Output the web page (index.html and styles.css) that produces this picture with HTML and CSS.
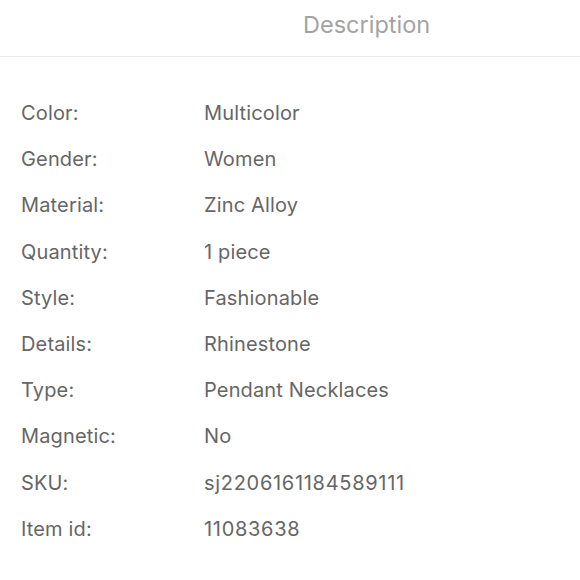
FILE: index.html
```html
<!DOCTYPE html>
<html>
<head>
<meta charset="utf-8">
<link rel="stylesheet" href="styles.css">
</head>
<body>
<div class="header"><span class="title">Description</span></div>
<div class="specs">
  <div class="row"><span class="label">Color:</span><span class="value">Multicolor</span></div>
  <div class="row"><span class="label">Gender:</span><span class="value">Women</span></div>
  <div class="row"><span class="label">Material:</span><span class="value">Zinc Alloy</span></div>
  <div class="row"><span class="label">Quantity:</span><span class="value">1 piece</span></div>
  <div class="row"><span class="label">Style:</span><span class="value">Fashionable</span></div>
  <div class="row"><span class="label">Details:</span><span class="value">Rhinestone</span></div>
  <div class="row"><span class="label">Type:</span><span class="value">Pendant Necklaces</span></div>
  <div class="row"><span class="label">Magnetic:</span><span class="value">No</span></div>
  <div class="row"><span class="label">SKU:</span><span class="value num">sj2206161184589111</span></div>
  <div class="row"><span class="label">Item id:</span><span class="value num">11083638</span></div>
</div>
</body>
</html>
```
FILE: styles.css
```css
html, body {
  margin: 0;
  padding: 0;
  background: #fff;
  font-family: Inter, "Noto Sans", sans-serif;
}
.header {
  height: 57px;
  border-bottom: 1px solid #ececec;
  display: flex;
  align-items: center;
  padding-left: 303px;
  box-sizing: border-box;
}
.title {
  font-size: 23.5px;
  color: #a3a3a3;
  margin-top: -8px;
}
.specs {
  padding-top: 33px;
  display: flex;
  flex-direction: column;
}
.row {
  display: flex;
  height: 46.2px;
  align-items: center;
  font-size: 20px;
  letter-spacing: 0.15px;
  color: #666;
}
.label {
  width: 183px;
  padding-left: 21px;
}
.value {
  color: #666;
}
.num {
  letter-spacing: 0.7px;
}
```
